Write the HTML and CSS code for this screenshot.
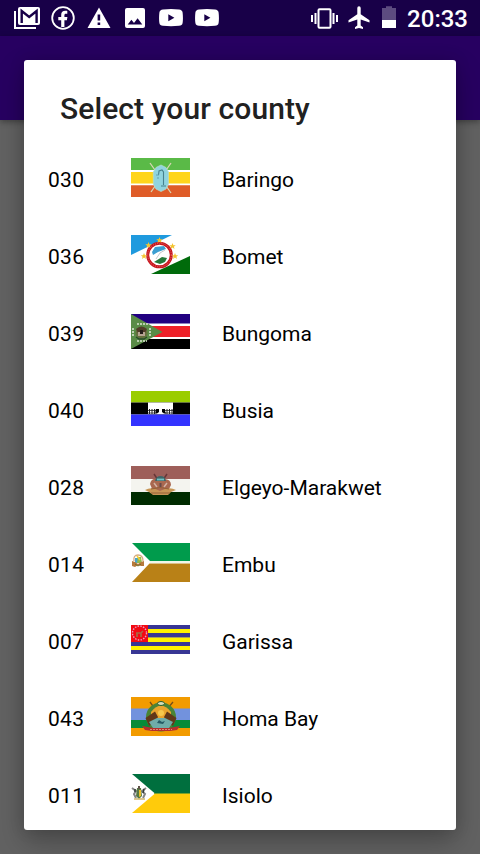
FILE: index.html
```html
<!DOCTYPE html>
<html lang="en">
<head>
<meta charset="utf-8">
<title>Select your county</title>
<link rel="stylesheet" href="styles.css">
</head>
<body>
<div class="screen">
  <header class="status">
    <div class="notifications">
      <svg width="26" height="24" viewBox="0 0 26 24"><path d="M1 5V22H22" fill="none" stroke="#fff" stroke-width="2"/><rect x="4" y="1" width="22" height="18" rx="2" fill="#fff"/><path d="M7.7 17V5L15.2 11 22.6 5V17" fill="none" stroke="#180048" stroke-width="2.4"/></svg>
      <svg width="24" height="24" viewBox="0 0 24 24"><circle cx="12" cy="12" r="10.8" fill="none" stroke="#fff" stroke-width="1.8"/><path d="M10.2 21V14.2H7.3V10.9H10.2V9C10.2 6.2 11.7 4.8 14.3 4.8C15.4 4.8 16.3 5 16.3 5V7.8H14.9C13.8 7.8 13.4 8.5 13.4 9.3V10.9H16.4L15.9 14.2H13.4V21Z" fill="#fff"/></svg>
      <svg width="24" height="24" viewBox="0 0 24 24"><path fill-rule="evenodd" d="M12 1.5L23.5 22H.5ZM10.6 8.5V14.5H13.2V8.5ZM10.6 16.5V19H13.2V16.5Z" fill="#fff"/></svg>
      <svg width="20" height="24" viewBox="0 0 20 24"><path fill-rule="evenodd" d="M2 2H18Q20 2 20 4V20Q20 22 18 22H2Q0 22 0 20V4Q0 2 2 2ZM2.7 18.5H17.3L12.6 12.2 9 17 6.4 13.8Z" fill="#fff"/></svg>
      <svg width="24" height="24" viewBox="0 0 24 24"><path fill-rule="evenodd" d="M4 3.4Q12 2.6 20 3.4Q23.2 3.6 23.6 6.5Q24.3 12 23.6 17Q23.2 19.6 20 19.8Q12 20.5 4 19.8Q.8 19.6 .4 17Q-.3 12 .4 6.5Q.8 3.6 4 3.4ZM9.3 8.3V15.3L15.4 11.8Z" fill="#fff"/></svg>
      <svg width="24" height="24" viewBox="0 0 24 24"><path fill-rule="evenodd" d="M4 3.4Q12 2.6 20 3.4Q23.2 3.6 23.6 6.5Q24.3 12 23.6 17Q23.2 19.6 20 19.8Q12 20.5 4 19.8Q.8 19.6 .4 17Q-.3 12 .4 6.5Q.8 3.6 4 3.4ZM9.3 8.3V15.3L15.4 11.8Z" fill="#fff"/></svg>
    </div>
    <div class="system">
      <svg width="27" height="24" viewBox="0 0 27 24"><rect x="7.5" y="3.2" width="12" height="18.6" rx="1" fill="none" stroke="#fff" stroke-width="2"/><path d="M1 9V16M4.5 7V18M22.5 7V18M26 9V16" stroke="#fff" stroke-width="2"/></svg>
      <svg width="22" height="24" viewBox="0 0 22 24"><path d="M9.3 2Q9.3 .3 11 .3T12.7 2V8.2L21.5 14.2V16.4L12.7 13.5V19.6L15 21.3V23L11 21.9 7 23V21.3L9.3 19.6V13.5L.5 16.4V14.2L9.3 8.2Z" fill="#fff"/></svg>
      <svg width="14" height="24" viewBox="0 0 14 24"><path d="M0 2H4V.3H10V2H14V14H0Z" fill="#5d4c80"/><path d="M0 14H14V22H0Z" fill="#fff"/></svg>
      <span class="clock">20:33</span>
    </div>
  </header>
  <div class="appbar"></div>
  <main class="dialog">
    <h1 class="title">Select your county</h1>
    <ul class="list">
      <li class="row"><span class="code">030</span>
        <svg class="flag" width="59" height="39" viewBox="0 0 59 39"><path d="M0 0H59V39H0Z" fill="#fff"/><path d="M0 0H59V12H0Z" fill="#5aba47"/><path d="M0 14H59V25.5H0Z" fill="#ffd51b"/><path d="M0 27.3H59V39H0Z" fill="#df5c28"/><path d="M19 5L40 35M40 5L20 34" stroke="#d8d5b5" stroke-width="1.3"/><path d="M30 7L35 9.5 37.5 14V26L35 31 30 33.5 25 31 22.3 26V14L25 9.5Z" fill="#90d4df" stroke="#b8dccc" stroke-width=".7"/><path d="M27.5 17L28 13 31 12 32.5 14V27M30 28H35" fill="none" stroke="#47828e" stroke-width="1.1"/><path d="M25 17H28M26 20H28" stroke="#64a5af"/></svg>
        <span class="name">Baringo</span></li>
      <li class="row"><span class="code">036</span>
        <svg class="flag" width="59" height="39" viewBox="0 0 59 39"><path d="M0 0H59V39H0Z" fill="#fff"/><path d="M0 0H41L0 20Z" fill="#1f9ade"/><path d="M59 21V39H20Z" fill="#006b0b"/><circle cx="28.5" cy="20" r="11.8" fill="#fff" stroke="#c9151d" stroke-width="3"/><circle cx="28.5" cy="20" r="11.8" fill="none" stroke="#e08080" stroke-width=".8" stroke-dasharray="1 1.2"/><path d="M21 17L24 12 33 11 35 14 27 17 22 20Z" fill="#3b9ed1"/><path d="M23 27L31 22 36 23 34 27 29 29Z" fill="#26783a"/><path d="M25 24L29 18 34 15" fill="none" stroke="#c7c9cb"/><g fill="#f4c431"><path id="star" d="M28.5 2L29.4 4.2H31.7L29.9 5.7 30.5 8 28.5 6.6 26.5 8 27.1 5.7 25.3 4.2H27.6Z"/><use href="#star" x="-11" y="5"/><use href="#star" x="13" y="6"/><use href="#star" x="-15.5" y="16"/><use href="#star" x="15.5" y="16"/></g></svg>
        <span class="name">Bomet</span></li>
      <li class="row"><span class="code">039</span>
        <svg class="flag" width="59" height="35" viewBox="0 0 59 35"><path d="M0 0H59V35H0Z" fill="#fff"/><path d="M0 0H59V9.5H0Z" fill="#210080"/><path d="M0 12H59V23H0Z" fill="#ef2028"/><path d="M0 25H59V35H0Z" fill="#000"/><path d="M0 0L31.5 18 0 35Z" fill="#5a8c47"/><path d="M2 14V22M19 14V22" stroke="#e0e6d7" stroke-width="1.5" stroke-dasharray="2 1"/><path d="M6 10H17M6 27H16" stroke="#dce5d2" stroke-width="1.4" stroke-dasharray="2 1"/><ellipse cx="10.5" cy="19" rx="6" ry="5.5" fill="#65703e"/><path d="M5 15Q10.5 10 16 15L14 19H7Z" fill="#513d29"/><path d="M7 18H14V22H7Z" fill="#b6a392"/><path d="M9 16H12V20H9Z" fill="#241d18"/><path d="M5 23L8 25H13L16 23" fill="none" stroke="#294c29" stroke-width="1.5"/></svg>
        <span class="name">Bungoma</span></li>
      <li class="row"><span class="code">040</span>
        <svg class="flag" width="59" height="35" viewBox="0 0 59 35"><path d="M0 0H59V11.5H0Z" fill="#9acd00"/><path d="M0 11.5H59V23.5H0Z" fill="#000"/><path d="M0 23.5H59V35H0Z" fill="#3333ff"/><path d="M17 11.5H42V23H17Z" fill="#fff"/><path d="M17 19.5H25M34 19.5H42M17 22H25M34 22H42" stroke="#555"/><path d="M18.5 18V23M21 18V23M23.5 18V23M36 18V23M38.5 18V23M41 18V23" stroke="#222"/><path d="M25 18H28V21L26 22.5H24.5V20ZM31 18H34V20L35 22.5H33L31 21Z" fill="#000"/></svg>
        <span class="name">Busia</span></li>
      <li class="row"><span class="code">028</span>
        <svg class="flag" width="59" height="39" viewBox="0 0 59 39"><path d="M0 0H59V13H0Z" fill="#9e5f5a"/><path d="M0 13H59V26H0Z" fill="#f4f4ef"/><path d="M0 26H59V39H0Z" fill="#002b00"/><path d="M23 8L27 14M36 8L32 14" stroke="#673638" stroke-width="1.5"/><path d="M19 18Q20 12 27 13H33Q40 13 40 19L37 25H22Z" fill="#a96850"/><path d="M14 24Q21 20 29 25 38 20 45 24L40 26 37 29H22L18 26Z" fill="#c79555"/><path d="M23 17L26 21M36 17L33 21" stroke="#d3b2a3" stroke-width="1.5"/><path d="M29.5 17V21" stroke="#674948" stroke-width="2"/><path d="M24 15Q25 10 29.5 10T35 15Z" fill="#3e6668"/><path d="M26 13.5H33" stroke="#70c2c5" stroke-width="1.8"/><path d="M20 23Q29 20 38 23M20 27H39" fill="none" stroke="#966039"/></svg>
        <span class="name">Elgeyo-Marakwet</span></li>
      <li class="row"><span class="code">014</span>
        <svg class="flag" width="59" height="39" viewBox="0 0 59 39"><path d="M0 0H59V39H0Z" fill="#fff"/><path d="M1 0H59V18H19Z" fill="#009b4c"/><path d="M19 19H59" stroke="#e0eed5"/><path d="M18.5 20.5H59V39H1Z" fill="#b98117"/><path d="M3 18Q2 12 7 12T12 18" fill="none" stroke="#d5ab80" stroke-width="1.3"/><path d="M4 15H7V20H4Z" fill="#49a6ca"/><path d="M7 14H10L11 20H6Z" fill="#91bb4a"/><path d="M6 13L9 17" stroke="#f1ce32" stroke-width="1.5"/><path d="M1 18L4 19 7 21 10 19 13 18V23H10L7 22 4 24 1 23Z" fill="#b7793c"/><path d="M4 21L7 23 10 21" fill="none" stroke="#716b27"/></svg>
        <span class="name">Embu</span></li>
      <li class="row"><span class="code">007</span>
        <svg class="flag" width="59" height="29" viewBox="0 0 59 29"><path d="M0 0H59V29H0Z" fill="#383694"/><path d="M0 4H59V8H0ZM0 12.5H59V17H0ZM0 21H59V25H0Z" fill="#fff200"/><path d="M17 12.5H59" stroke="#aaa25c"/><path d="M0 0H17V17H0Z" fill="#f20a12"/><circle cx="8.5" cy="8" r="7" fill="none" stroke="#e5a0ca" stroke-width="1.4" stroke-dasharray="1.5 1.3"/><path d="M5 8H10L12 6M6 8V12M10 8V12" fill="none" stroke="#a76b45" stroke-width="1.7"/></svg>
        <span class="name">Garissa</span></li>
      <li class="row"><span class="code">043</span>
        <svg class="flag" width="59" height="39" viewBox="0 0 59 39"><path d="M0 0H59V39H0Z" fill="#f29b00"/><path d="M0 11.5H59V23H0Z" fill="#7292dd"/><path d="M0 23H59V31H0Z" fill="#078b38"/><path d="M19 5L24 12M42 5L36 12" stroke="#775018" stroke-width="1.3"/><ellipse cx="30" cy="20" rx="15" ry="14.5" fill="#4a8436"/><path d="M20 15Q30 2 40 15V24H20Z" fill="#e9a52e"/><circle cx="30" cy="16" r="3" fill="#f6c94e"/><path d="M14.5 21L24 14.5 27 20 24 25 18 29ZM45.5 21L36 14.5 33 20 36 25 42 29Z" fill="#613819"/><path d="M18 25L26 21H34L42 25 38 31H22Z" fill="#6fadaa"/><path d="M26 26L28 23 31 25 34 24 32 27Z" fill="#245b66"/><ellipse cx="30" cy="6.5" rx="3.5" ry="2" fill="#d8dfb9" stroke="#285d2a"/><path d="M11 29L17 30 22 31H38L43 30 49 29 46 33 39 34H21L14 33Z" fill="#b52f2c"/><path d="M19 32.5H41" stroke="#dc8a78" stroke-dasharray="2 1"/></svg>
        <span class="name">Homa Bay</span></li>
      <li class="row"><span class="code">011</span>
        <svg class="flag" width="59" height="39" viewBox="0 0 59 39"><path d="M0 0H59V39H0Z" fill="#fff"/><path d="M1 0H59V19.5H24Z" fill="#006f3e"/><path d="M24 19.5H59V39H1Z" fill="#ffcb0b"/><path d="M23 19.5H59" stroke="#6b981d" stroke-width=".8"/><path d="M1 14L5 17 3 20 5 24M15 14L11 17 14 20 12 24" fill="none" stroke="#858585" stroke-width="2"/><path d="M4 15V18M13 15L12 19" stroke="#303a36" stroke-width="1.5"/><path d="M6 14H10L11 22 8 25 5 22Z" fill="#567842"/><path d="M8 16H10V22L8 23Z" fill="#eabf29"/><path d="M7 12H9V15H7Z" fill="#605348"/><path d="M3 25H14" stroke="#d0b46b" stroke-width="1.5"/></svg>
        <span class="name">Isiolo</span></li>
    </ul>
  </main>
</div>
</body>
</html>
```

FILE: styles.css
```css
* { box-sizing: border-box; }

body {
  margin: 0;
  font-family: Roboto, "Liberation Sans", sans-serif;
}

svg { display: block; flex: none; }

.screen {
  width: 480px;
  height: 854px;
  overflow: hidden;
  background: #626262;
}

.status {
  height: 36px;
  padding: 0 12px 0 14px;
  display: flex;
  justify-content: space-between;
  align-items: center;
  background: #180048;
  color: #fff;
}

.notifications,
.system {
  display: flex;
  align-items: center;
}

.notifications { gap: 12px; }
.notifications svg:nth-child(2) { margin-left: -1px; }
.notifications svg:nth-child(4) { margin: 0 2px; }
.system { gap: 10px; }
.system svg:nth-child(3) { margin-left: 2px; }

.clock {
  font-size: 24px;
  line-height: 36px;
  font-weight: 500;
  padding: 1px 0 0 1px;
}

.appbar {
  height: 84px;
  background: #270061;
  box-shadow: 0 2px 6px rgba(0, 0, 0, .35);
}

.dialog {
  position: relative;
  width: 432px;
  height: 770px;
  margin: -60px auto 0;
  overflow: hidden;
  border-radius: 3px;
  background: #fff;
  box-shadow: 0 12px 28px rgba(0, 0, 0, .26), 0 0 16px rgba(0, 0, 0, .12);
}

.title {
  height: 79px;
  margin: 0;
  padding: 27px 36px 0;
  font-size: 30px;
  line-height: 44px;
  font-weight: 500;
  letter-spacing: .1px;
  color: #212121;
}

.list {
  margin: 0;
  padding: 0;
  list-style: none;
}

.row {
  height: 77px;
  padding: 0 24px;
  display: grid;
  grid-template-columns: 83px 91px 1fr;
  align-items: center;
  font-size: 21px;
  line-height: 28px;
  color: #000;
}

.code,
.name { padding-top: 4px; }

.code { letter-spacing: .3px; }
```
